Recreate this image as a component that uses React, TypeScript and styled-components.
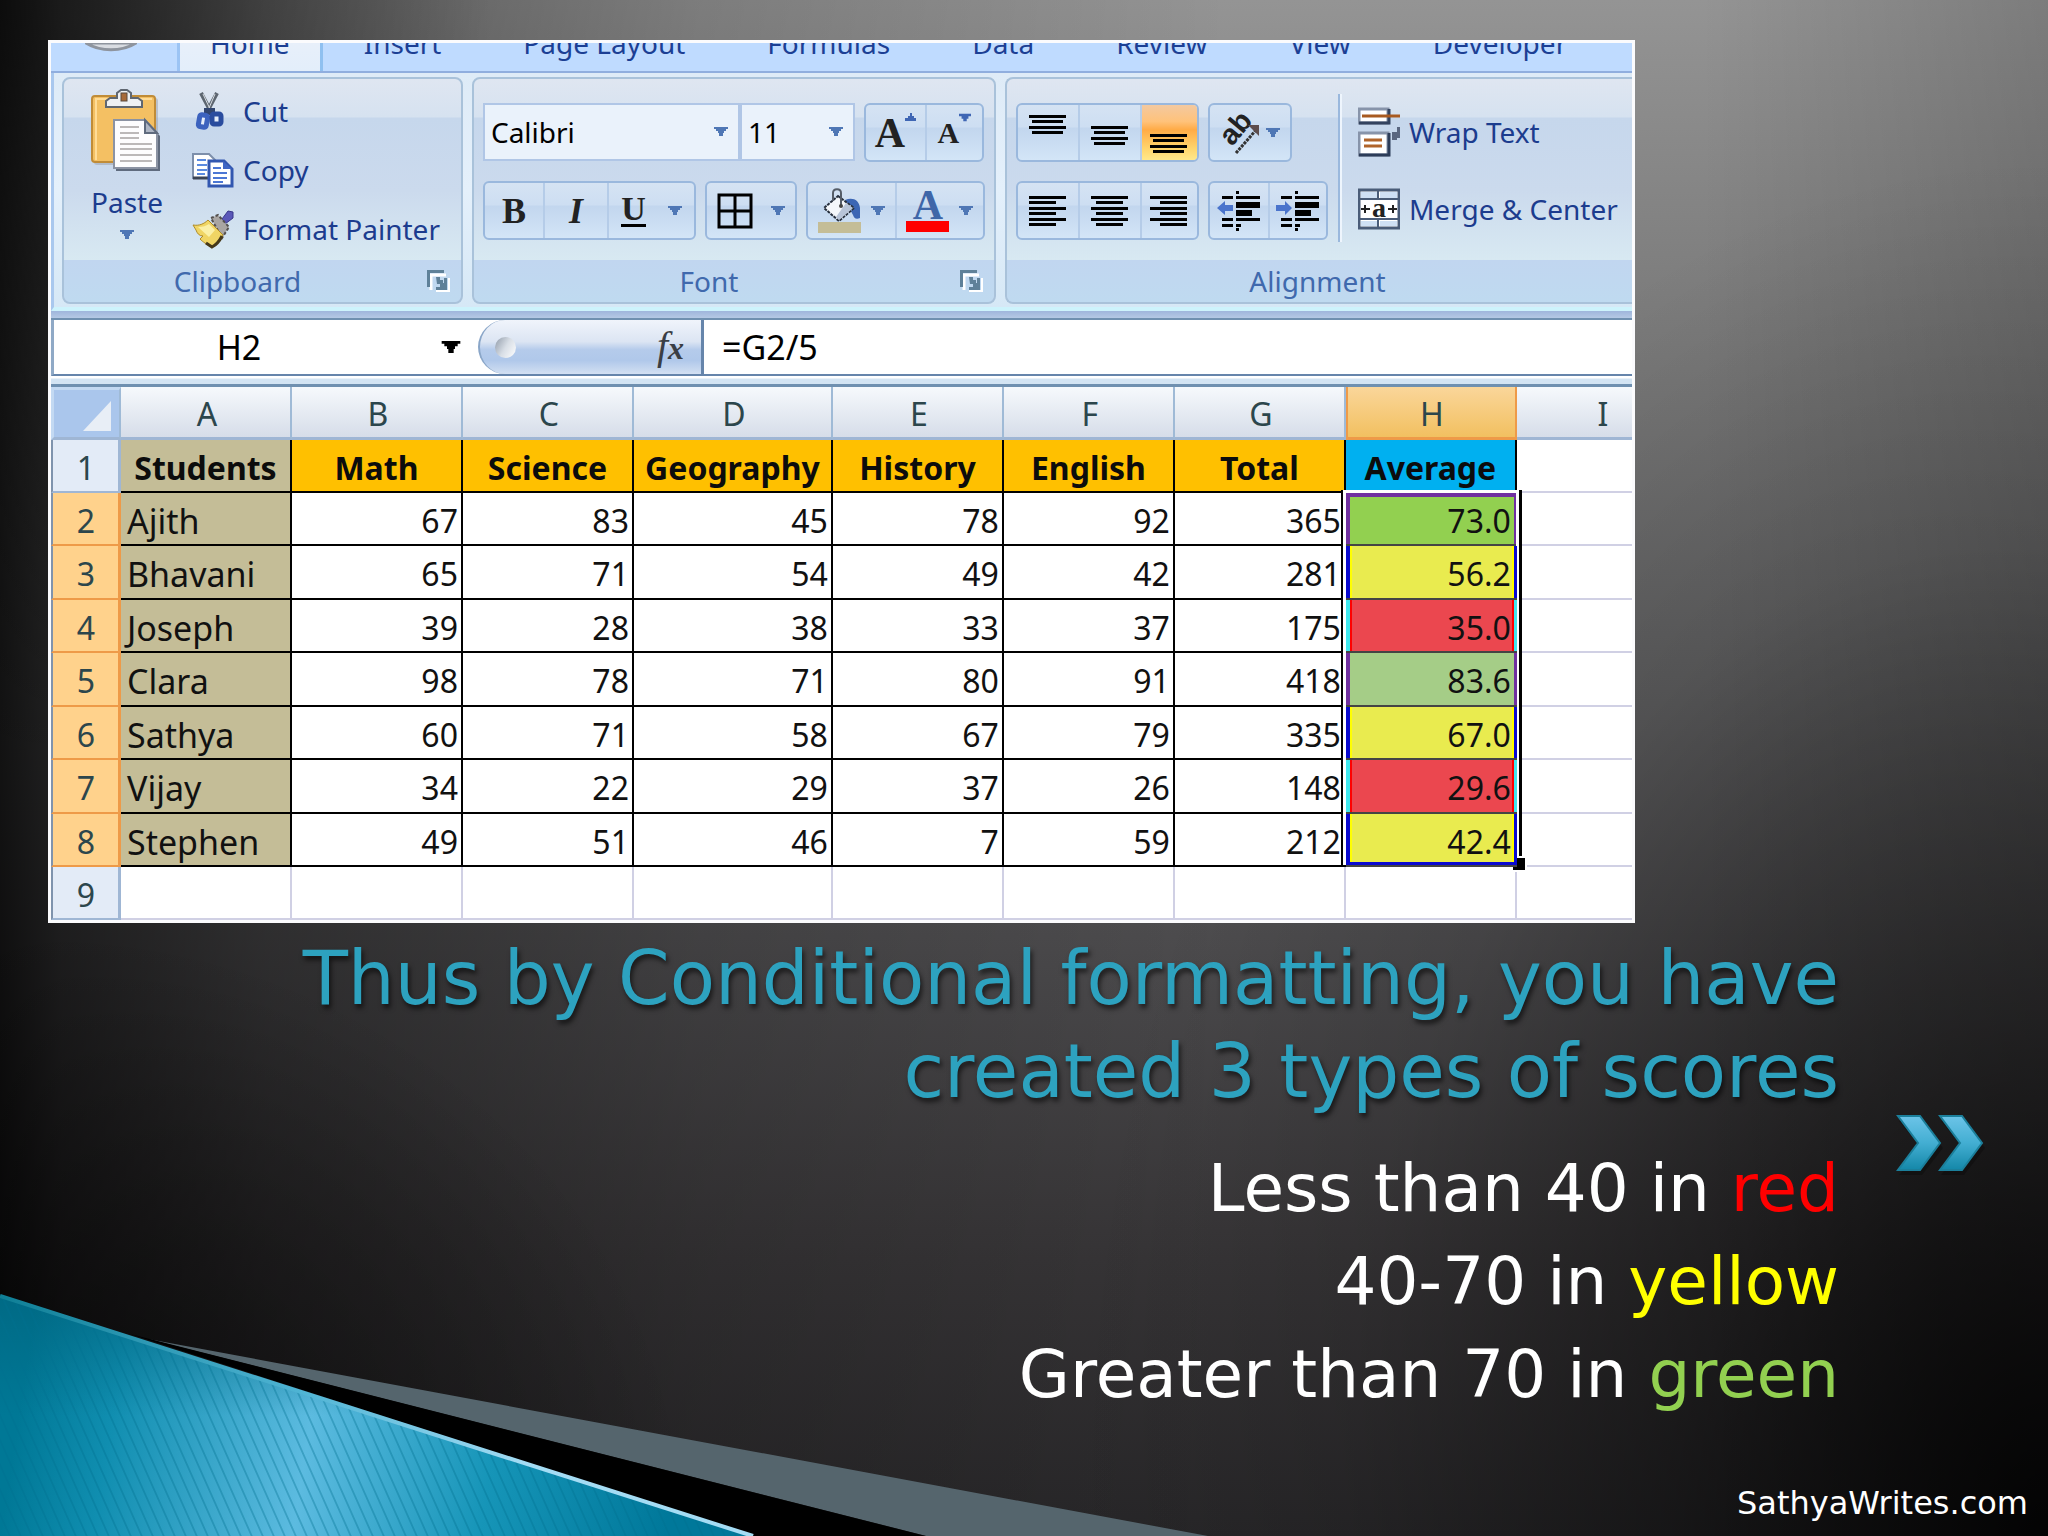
import React from "react";
import styled, { createGlobalStyle, css } from "styled-components";

const uiFont = `"Noto Sans", "Open Sans", sans-serif`;
const slideFont = `"DejaVu Sans", "Noto Sans", sans-serif`;
const serifFont = `"Liberation Serif", serif`;

const GlobalStyle = createGlobalStyle`
  *, *::before, *::after { box-sizing: border-box; }
  body { margin: 0; background: #000; font-family: ${uiFont}; }
  button, input, select { font: inherit; color: inherit; margin: 0; padding: 0; border: 0; background: none; border-radius: 0; }
  svg { display: block; }
`;

const Slide = styled.main`
  position: relative;
  min-height: 100vh;
  display: flex;
  flex-direction: column;
  padding: 40px 0 0 48px;
  overflow: hidden;
  background:
    radial-gradient(ellipse 48% 90% at 100% 100%, rgba(0,0,0,0.9) 0%, rgba(0,0,0,0.45) 38%, rgba(0,0,0,0.12) 72%, rgba(0,0,0,0) 100%),
    radial-gradient(ellipse 24% 50% at 0% 0%, rgba(0,0,0,0.6) 0%, rgba(0,0,0,0) 100%),
    radial-gradient(ellipse 34% 40% at 0% 100%, rgba(0,0,0,0.6) 0%, rgba(0,0,0,0) 100%),
    linear-gradient(to right, rgba(0,0,0,0.8) 0%, rgba(0,0,0,0.62) 3%, rgba(0,0,0,0.4) 13%, rgba(0,0,0,0.3) 22%, rgba(0,0,0,0.16) 34%, rgba(0,0,0,0) 60%, rgba(0,0,0,0) 83%, rgba(0,0,0,0.16) 100%),
    linear-gradient(to bottom, #949494 0%, #777777 24%, #606061 43%, #4d4c4e 61%, #373537 82%, #282729 100%);
`;

/* ---------- spreadsheet window ---------- */

const Sheet = styled.section`
  position: relative;
  width: 79.35%;
  border: 3px solid #fbfbfd;
  background: #fff;
  overflow: hidden;
`;

const Tabs = styled.nav`
  display: flex;
  align-items: flex-end;
  height: 30px;
  overflow: hidden;
  background: #bfdbff;
  border-bottom: 2px solid #90aede;
`;

const OfficeButton = styled.div`
  align-self: flex-start;
  width: 126px;
  padding-left: 34px;
`;

const Tab = styled.button<{ $active?: boolean }>`
  padding: 0 ${(p) => (p.$active ? 30 : 41)}px 12px;
  font-size: 28px;
  line-height: 32px;
  color: #1c3f94;
  white-space: nowrap;
  ${(p) =>
    p.$active &&
    css`
      background: linear-gradient(#eaf0fa, #e3eefa);
      border-left: 3px solid #9cc4f4;
      border-right: 3px solid #8fc0f0;
    `}
`;

const Ribbon = styled.div`
  display: flex;
  gap: 9px;
  padding: 4px 0 3px 8px;
  background: linear-gradient(#deebf7, #e4f0fb 50%, #d6e8f6);
  border-left: 3px solid #a9c8ee;
  border-bottom: 4px solid #cdf3fc;
`;

const Group = styled.fieldset<{ $open?: boolean }>`
  min-width: 0;
  margin: 0;
  padding: 0;
  display: flex;
  flex-direction: column;
  border: 2px solid #a9c2da;
  border-radius: 8px;
  background: linear-gradient(#dfe6f1 0, #d6e2f0 38px, #c6d7ec 39px, #cbdaed 50%, #d8e9f2 181px, #c1d8f0 182px);
  overflow: hidden;
  ${(p) =>
    p.$open &&
    css`
      flex: 1;
      border-right: 0;
      border-top-right-radius: 0;
      border-bottom-right-radius: 0;
    `}
`;

const GroupBody = styled.div`
  display: flex;
  height: 181px;
`;

const GroupFooter = styled.div`
  display: flex;
  align-items: center;
  height: 42px;
  font-size: 28px;
  line-height: 40px;
  color: #4069ad;
  background: linear-gradient(#c1d6f0, #bfdaf0);
`;

const GroupName = styled.span`
  flex: 1;
  padding-right: 4px;
  text-align: center;
`;

const Launcher = styled.button`
  width: 46px;
  display: flex;
  padding-left: 12px;
`;

const PasteButton = styled.button`
  display: flex;
  flex-direction: column;
  align-items: center;
  margin-left: 27px;
  padding-top: 10px;
  height: 170px;
  font-size: 28px;
  line-height: 40px;
  color: #1c3c8e;
`;

const PasteText = styled.span`
  margin: 9px 0 8px;
`;

const ClipList = styled.div`
  display: flex;
  flex-direction: column;
  padding: 2px 21px 0 29px;
`;

const IconTextButton = styled.button`
  display: flex;
  align-items: center;
  gap: 9px;
  height: 59px;
  font-size: 28px;
  line-height: 40px;
  color: #1c3c8e;
  white-space: nowrap;
`;

const Rows = styled.div`
  display: flex;
  flex-direction: column;
  gap: 19px;
  padding: 24px 9px 0;
`;

const Row = styled.div`
  display: flex;
  gap: 9px;
`;

const ComboPair = styled.div`
  display: flex;
`;

const Combo = styled.label<{ $w: number }>`
  position: relative;
  width: ${(p) => p.$w}px;
  height: 58px;
  border: 2px solid #b0c6e6;
  background: #eaf2fb;
`;

const ComboArrow = styled.span`
  position: absolute;
  right: 10px;
  top: 22px;
  pointer-events: none;
`;

const ComboSelect = styled.select`
  appearance: none;
  width: 100%;
  height: 100%;
  padding: 0 6px;
  font-size: 28px;
  color: #000;
`;

const ButtonBar = styled.div`
  display: flex;
  height: 59px;
  border: 2px solid #9ab8dd;
  border-radius: 6px;
  background: linear-gradient(#d5e3f3 0, #cddef2 40%, #c2d6ee 42%, #d3e5f7 100%);
  overflow: hidden;
`;

const Tool = styled.button<{ $w: number; $on?: boolean; $gap?: number }>`
  display: flex;
  align-items: center;
  justify-content: center;
  gap: ${(p) => p.$gap ?? 10}px;
  width: ${(p) => p.$w}px;
  color: #1a1a1a;
  & + & {
    border-left: 2px solid #b5cce8;
  }
  ${(p) =>
    p.$on &&
    css`
      background: linear-gradient(#f3c9a0 0, #ffc27a 30%, #ffab46 45%, #ffd66e 80%, #ffe88a 100%);
    `}
`;

const Glyph = styled.span<{ $size: number; $italic?: boolean; $underline?: boolean; $blue?: boolean }>`
  font-family: ${serifFont};
  font-weight: bold;
  font-size: ${(p) => p.$size}px;
  line-height: 40px;
  font-style: ${(p) => (p.$italic ? "italic" : "normal")};
  color: ${(p) => (p.$blue ? "#3f66a8" : "#222")};
  ${(p) =>
    p.$underline &&
    css`
      border-bottom: 3px solid #000;
      line-height: 30px;
    `}
`;

const Sized = styled.span`
  display: flex;
  align-items: flex-start;
`;

const InkStack = styled.span`
  display: flex;
  flex-direction: column;
  align-items: center;
`;

const InkLetter = styled(Glyph)`
  line-height: 32px;
`;

const InkBar = styled.span<{ $color: string }>`
  width: 43px;
  height: 11px;
  background: ${(p) => p.$color};
`;

const Divider = styled.div`
  width: 4px;
  height: 148px;
  margin: 15px 16px 0 1px;
  border-left: 2px solid #9ab8dd;
  border-right: 2px solid #eef5fd;
`;

const TextButtons = styled.div`
  display: flex;
  flex-direction: column;
  gap: 18px;
  padding-top: 23px;
`;

const Seam = styled.div`
  height: 9px;
  background: linear-gradient(#9fb6dc, #b4c8e4);
  border-bottom: 2px solid #6f90b0;
`;

const FormulaBar = styled.div`
  display: flex;
  height: 56px;
  border-left: 3px solid #8fa9c6;
  border-bottom: 2px solid #6685ab;
  background: #fff;
  font-size: 34px;
  color: #000;
`;

const NameBox = styled.div`
  display: flex;
  align-items: center;
  width: 424px;
`;

const NameInput = styled.input`
  width: 370px;
  text-align: center;
`;

const NameArrow = styled.button`
  padding-left: 17px;
`;

const FunctionPill = styled.div`
  display: flex;
  align-items: center;
  justify-content: space-between;
  width: 226px;
  padding: 0 17px 0 15px;
  border-left: 2px solid #8aa6c8;
  border-right: 3px solid #6685ab;
  border-radius: 28px 0 0 28px;
  background: linear-gradient(#f0f4fb 0, #dce5f3 40%, #b5cbeb 55%, #b0c8ea 75%, #d3e0f2 100%);
`;

const Knob = styled.span`
  width: 21px;
  height: 21px;
  border-radius: 50%;
  background: linear-gradient(120deg, #8f9aa8, #d8dee6 50%, #fff);
`;

const FxButton = styled.button`
  font-family: ${serifFont};
  font-style: italic;
  font-size: 40px;
  line-height: 40px;
  color: #3a3e45;
`;

const FxSmall = styled.span`
  font-size: 32px;
  font-weight: bold;
`;

const FormulaInput = styled.input`
  flex: 1;
  min-width: 0;
  padding: 0 18px;
`;

const Strip = styled.div`
  height: 11px;
  border-bottom: 3px solid #6f90b0;
  background: linear-gradient(#fff 0, #fff 2px, #d3e4f3 3px);
`;

/* ---------- grid ---------- */

const columns = [70, 171, 171, 171, 199, 171, 171, 171, 171, 171];
const totalWidth = columns.reduce((a, b) => a + b, 0);

/* The last column runs past the window's right edge. */
const Grid = styled.table`
  width: 103.54%;
  table-layout: fixed;
  border-collapse: separate;
  border-spacing: 0;
  font-size: 32px;
  line-height: 40px;
  color: #111;
`;

const Col = styled.col<{ $w: number }>`
  width: ${(p) => (p.$w / totalWidth) * 100}%;
`;

const GridRow = styled.tr<{ $tall?: boolean }>`
  height: ${(p) => (p.$tall ? 54 : 53)}px;
`;

const cell = css`
  padding: 4px 3px 0 6px;
  white-space: nowrap;
  overflow: hidden;
`;

const ColumnHead = styled.th<{ $on?: boolean }>`
  ${cell}
  font-weight: normal;
  color: #2c464c;
  background: linear-gradient(#f6f9fc, #d6dde9);
  border-right: 2px solid #9fbad6;
  border-bottom: 3px solid #9fb6d4;
  ${(p) =>
    p.$on &&
    css`
      background: linear-gradient(#fad69a, #f2c060);
      border-color: #ee9a48;
      box-shadow: inset 2px 0 #ee9a48;
    `}
`;

const Corner = styled.td`
  padding: 0;
  background: #aac6ec;
  border: 3px solid #c3d9f2;
  border-right: 2px solid #9fbad6;
  border-bottom-color: #9fb6d4;
`;

const CornerMark = styled.svg`
  margin: 4px 8px 0 auto;
`;

const RowHead = styled.th<{ $on?: boolean }>`
  ${cell}
  font-weight: normal;
  color: #2c464c;
  padding-left: 4px;
  background: ${(p) => (p.$on ? "#ffd28c" : "#e3ebf7")};
  border-right: 3px solid ${(p) => (p.$on ? "#ee9a48" : "#9fb6d4")};
  border-bottom: 2px solid ${(p) => (p.$on ? "#ee9a48" : "#9fb6d4")};
  border-left: 2px solid #7f93ad;
`;

const Title = styled.th<{ $bg: string; $last?: boolean }>`
  ${cell}
  padding: 4px 0 0;
  text-align: center;
  font-weight: bold;
  color: #0c0c0c;
  background: ${(p) => p.$bg};
  border-right: 2px solid #000;
  border-bottom: ${(p) => (p.$last ? "2px solid #d0703a" : "2px solid #000")};
`;

const Name = styled.td`
  ${cell}
  font-size: 34px;
  background: #c4bd97;
  border-right: 2px solid #000;
  border-bottom: 2px solid #000;
`;

const Num = styled.td`
  ${cell}
  text-align: right;
  border-right: 2px solid #000;
  border-bottom: 2px solid #000;
`;

const Empty = styled.td`
  border-right: 2px solid #d0d0e4;
  border-bottom: 2px solid #d0d0e4;
`;

const bands = {
  green: { bg: "#92d050", edge: "#7030a0", inner: "#92d050" },
  sage: { bg: "#a5cd87", edge: "#7030a0", inner: "#a5cd87" },
  yellow: { bg: "#e9eb4f", edge: "#0a0ad0", inner: "#ffff00" },
  red: { bg: "#eb474f", edge: "#3fe8ee", inner: "#ff0000" },
};
type Band = keyof typeof bands;

const Avg = styled.td<{ $band: Band; $first?: boolean; $last?: boolean }>`
  ${cell}
  position: relative;
  overflow: visible;
  padding-right: 6px;
  text-align: right;
  background: ${(p) => bands[p.$band].bg};
  border-bottom: 2px solid #444;
  box-shadow:
    inset 4px 0 ${(p) => bands[p.$band].edge},
    inset -3px 0 ${(p) => bands[p.$band].edge}
    ${(p) => p.$first && `, inset 0 4px ${bands[p.$band].edge}`}
    ${(p) => p.$last && `, inset 0 -3px ${bands[p.$band].edge}`},
    inset 6px 0 ${(p) => bands[p.$band].inner},
    inset -5px 0 ${(p) => bands[p.$band].inner};
`;

const Selection = styled.span`
  position: absolute;
  top: -3px;
  left: -3px;
  width: calc(100% + 5px);
  height: calc(700% + 18px);
  border: 3px solid #fff;
  box-shadow: -2px 0 #000, 3px 0 #000, 0 2px #000;
  pointer-events: none;
  &::after {
    content: "";
    position: absolute;
    right: -9px;
    bottom: -8px;
    width: 12px;
    height: 12px;
    background: #000;
    outline: 2px solid #fff;
  }
`;

/* ---------- slide text ---------- */

const Copy = styled.div`
  position: relative;
  padding: 9px 10.45% 0 0;
  text-align: right;
  font-family: ${slideFont};
`;

const Heading = styled.h1`
  margin: 0 0 24px;
  font-size: 74px;
  font-weight: normal;
  line-height: 93px;
  color: #2da2bf;
  text-shadow: 2px 4px 5px rgba(0, 0, 0, 0.6);
`;

const Line = styled.p`
  margin: 0;
  font-size: 66px;
  line-height: 93px;
  color: #fff;
`;

const Hue = styled.span<{ $color: string }>`
  color: ${(p) => p.$color};
`;

const Chevrons = styled.svg`
  position: absolute;
  right: 62px;
  top: 192px;
  overflow: visible;
`;

const Footer = styled.footer`
  position: relative;
  margin-top: auto;
  padding: 0 20px 10px 0;
  text-align: right;
  font-family: ${slideFont};
  font-size: 32px;
  line-height: 46px;
  color: #fff;
`;

const Corners = styled.svg`
  position: absolute;
  left: 0;
  bottom: 0;
`;

/* ---------- icons ---------- */

const Down = ({ color = "#4f77b5", w = 14 }: { color?: string; w?: number }) => (
  <svg width={w} height={w === 14 ? 9 : 12} viewBox="0 0 14 9">
    <path d="M0 0h14v2h-2v2h-2v2H9v3H5V6H4V4H2V2H0z" fill={color} />
  </svg>
);

const LaunchIcon = () => (
  <svg width="23" height="22" viewBox="0 0 23 22">
    <path d="M4 20V5h15" fill="none" stroke="#fff" strokeWidth="3" />
    <path d="M1.500 17V1.500H17" fill="none" stroke="#5f8199" strokeWidth="3" />
    <path d="M9 7h4v3h3v3h1V8h3v13H9v-4h4v-3h-3z" fill="#5f8199" />
    <path d="M22 8v13H9" fill="none" stroke="#fff" strokeWidth="2" />
  </svg>
);

const PasteIcon = () => (
  <svg width="72" height="84" viewBox="0 0 72 84">
    <rect x="3" y="9" width="64" height="67" rx="3" fill="#9b9fa8" opacity=".5" />
    <rect x="1" y="7" width="63" height="66" rx="3" fill="#f4c063" stroke="#c08c38" strokeWidth="2" />
    <path d="M5 71V10h56" fill="none" stroke="#ffdc96" strokeWidth="2" />
    <path d="M15 18v-6l4-3h7V4l4-3h6l4 3v5h7l4 3v6z" fill="#eef0f3" stroke="#5f6670" strokeWidth="2" />
    <rect x="30" y="4" width="6" height="8" fill="#a86a38" stroke="#58483c" strokeWidth="1" />
    <path d="M25 33h31l13 14v35H25z" fill="#5f6b7e" />
    <path d="M23 31h31l12 13v35H23z" fill="#fdfdfe" stroke="#8b93a3" strokeWidth="2" />
    <path d="M54 31v13h12z" fill="#aeb6c4" stroke="#5f6b7e" strokeWidth="2" />
    <path d="M29 38h19M29 44h19M29 49h19M29 55h32M29 60h32M29 66h32M29 72h32" stroke="#bcb9b9" strokeWidth="2" />
  </svg>
);

const CutIcon = () => (
  <svg width="42" height="40" viewBox="0 0 42 40">
    <path d="M9 2l9 17M25 2l-9 17" stroke="#5d6670" strokeWidth="4" />
    <path d="M11 3l7 15M23 3l-6 14" stroke="#d8dde2" strokeWidth="1" />
    <path d="M12 17h11v7H12z" fill="#31456f" />
    <rect x="7" y="24" width="8" height="12" rx="2" fill="#e5edf9" stroke="#3c62be" strokeWidth="5" transform="rotate(10 11 30)" />
    <rect x="20" y="23" width="9" height="10" rx="2" fill="#e5edf9" stroke="#2a4c9e" strokeWidth="5" />
  </svg>
);

const CopyIcon = () => (
  <svg width="42" height="36" viewBox="0 0 42 36">
    <path d="M1 2h16l6 6v18H1z" fill="#fff" stroke="#7d8fab" strokeWidth="2" />
    <path d="M1 26h20" stroke="#3a4354" strokeWidth="3" />
    <path d="M5 8h9M5 13h10M5 18h10M5 22h8" stroke="#5b8be0" strokeWidth="2" />
    <path d="M17 9h15l8 8v17H17z" fill="#fff" stroke="#3257b0" strokeWidth="3" />
    <path d="M31 9v8h9z" fill="#3f66c4" />
    <path d="M21 16h8M21 21h14M21 26h14M21 30h10" stroke="#4c77d4" strokeWidth="2" />
  </svg>
);

const BrushIcon = () => (
  <svg width="42" height="40" viewBox="0 0 42 40">
    <path d="M30 10l6-8 5 1v6l-8 6z" fill="#5a58b8" stroke="#38368a" />
    <path d="M19 9l7-3 11 12-7 11z" fill="#a9a5a2" stroke="#54504e" strokeWidth="2" strokeDasharray="3 2" />
    <path d="M1 16c6 1 11-1 15-5l15 15c-3 6-6 10-11 12-6-3-9-5-12-8l3-3c-4 0-6-3-7-6z" fill="#f0d564" stroke="#b08c28" strokeWidth="1" />
    <path d="M6 18c5 0 8-1 11-3l6 6-6 7z" fill="#fbf0a6" />
    <path d="M30 27c-3 6-6 9-10 11l-6-4" fill="none" stroke="#453818" strokeWidth="3" />
  </svg>
);

const BordersIcon = () => (
  <svg width="36" height="36" viewBox="0 0 36 36">
    <path d="M2 2h32v32H2zM18 2v32M2 18h32" fill="none" stroke="#000" strokeWidth="3" />
  </svg>
);

const BucketIcon = () => (
  <svg width="43" height="34" viewBox="0 0 43 34">
    <path d="M27 12c8-3 14 0 15 8v10c-4 2-6 0-7-3z" fill="#3c66b4" />
    <path d="M20 8l16 12-15 13L6 20z" fill="#f4f7fb" stroke="#27303e" strokeWidth="2" strokeDasharray="3 1" />
    <path d="M21 32l14-12-7-5-10 14z" fill="#b7c4d8" />
    <path d="M15 13V5c0-5 8-5 8 0v13" fill="none" stroke="#555d68" strokeWidth="2" />
    <circle cx="23" cy="18" r="2" fill="#444" />
  </svg>
);

const Lines = ({ h, rows }: { h: number; rows: [number, number, number][] }) => (
  <svg width="38" height={h} viewBox={`0 0 38 ${h}`}>
    {rows.map(([x, y, w]) => (
      <rect key={y} x={x} y={y} width={w} height="3" fill="#000" />
    ))}
  </svg>
);

const vertical = (top: number): [number, number, number][] => [
  [0, top, 37],
  [3, top + 5, 31],
  [0, top + 11, 37],
  [3, top + 16, 31],
];

const horizontal = (short: number): [number, number, number][] =>
  [0, 5, 11, 16, 22, 27].map((y, i) => (i % 2 ? [short, y, 27] : [0, y, 37]));

const OrientationIcon = () => (
  <svg width="42" height="44" viewBox="0 0 42 44">
    <text x="0" y="0" transform="translate(13 36) rotate(-50)" fontFamily="Liberation Sans" fontWeight="bold" fontSize="29" fill="#222">ab</text>
    <path d="M17 42L37 19" stroke="#333" strokeWidth="3" strokeDasharray="3 1" />
    <path d="M29 14h11v11z" fill="#5d4d4d" />
  </svg>
);

const IndentIcon = ({ right }: { right?: boolean }) => (
  <svg width="43" height="42" viewBox="0 0 43 42">
    <path d="M5 6h11v3H5zM5 28h11v3H5zM5 34h11v3H5zM19 6h24v3H19zM19 12h24v6H19zM19 20h16v6H19zM19 28h24v3H19zM19 34h5v3h-5z" fill="#000" />
    <path d="M19 1h3v3h-3zM19 38h3v3h-3z" fill="#000" />
    <path d={right ? "M16 18L9 11v4H0v6h9v4z" : "M0 18l8-7v4h8v6H8v4z"} fill="#4a74cc" />
  </svg>
);

const WrapIcon = () => (
  <svg width="42" height="50" viewBox="0 0 42 50">
    <path d="M1 2h29v14H1z" fill="#fff" stroke="#8794aa" strokeWidth="3" />
    <path d="M1 16h30V2" fill="none" stroke="#33435f" strokeWidth="3" />
    <path d="M4 9h38" stroke="#a85a20" strokeWidth="3" />
    <path d="M1 26h29v22H1z" fill="#fff" stroke="#8794aa" strokeWidth="3" />
    <path d="M1 48h30V26" fill="none" stroke="#2c3c58" strokeWidth="3" />
    <path d="M6 33h18M6 39h18" stroke="#b0642a" strokeWidth="3" />
    <path d="M39 20h3v11h-3v2h-5v-8h5z" fill="#5a6780" />
  </svg>
);

const MergeIcon = () => (
  <svg width="42" height="42" viewBox="0 0 42 42">
    <rect x="1" y="2" width="40" height="38" fill="#fff" stroke="#4a5c78" strokeWidth="3" />
    <path d="M3 4h16v6H3zM22 4h17v6H22zM3 33h16v5H3zM22 33h17v5H22z" fill="#cfe0f4" />
    <path d="M20 3v9M20 31v8M2 11h38M2 31h38" stroke="#4a5c78" strokeWidth="2" />
    <path d="M3 21h9M7 17v8M30 21h9M35 17v8" stroke="#222" strokeWidth="2" />
    <text x="21" y="29" textAnchor="middle" fontFamily="Liberation Serif" fontWeight="bold" fontSize="28" fill="#222">a</text>
  </svg>
);

/* ---------- data ---------- */

const tabs = ["Insert", "Page Layout", "Formulas", "Data", "Review", "View", "Developer"];
const letters = ["A", "B", "C", "D", "E", "F", "G", "H", "I"];
const subjects = ["Math", "Science", "Geography", "History", "English", "Total"];
const students: { name: string; marks: number[]; avg: string; band: Band }[] = [
  { name: "Ajith", marks: [67, 83, 45, 78, 92, 365], avg: "73.0", band: "green" },
  { name: "Bhavani", marks: [65, 71, 54, 49, 42, 281], avg: "56.2", band: "yellow" },
  { name: "Joseph", marks: [39, 28, 38, 33, 37, 175], avg: "35.0", band: "red" },
  { name: "Clara", marks: [98, 78, 71, 80, 91, 418], avg: "83.6", band: "sage" },
  { name: "Sathya", marks: [60, 71, 58, 67, 79, 335], avg: "67.0", band: "yellow" },
  { name: "Vijay", marks: [34, 22, 29, 37, 26, 148], avg: "29.6", band: "red" },
  { name: "Stephen", marks: [49, 51, 46, 7, 59, 212], avg: "42.4", band: "yellow" },
];

export default function App() {
  return (
    <>
      <GlobalStyle />
      <Slide>
        <Corners width="1210" height="242" viewBox="0 0 1210 242" aria-hidden="true">
          <defs>
            <linearGradient id="sea" gradientUnits="userSpaceOnUse" x1="0" y1="242" x2="650" y2="342">
              <stop offset="0" stopColor="#007896" />
              <stop offset="0.14" stopColor="#108eb0" />
              <stop offset="0.44" stopColor="#5cbbe0" />
              <stop offset="0.72" stopColor="#1695b8" />
              <stop offset="1" stopColor="#00789a" />
            </linearGradient>
            <linearGradient id="shade" x1="0" y1="0" x2="0" y2="1">
              <stop offset="0" stopColor="#00647e" stopOpacity="0.7" />
              <stop offset="0.5" stopColor="#00647e" stopOpacity="0" />
            </linearGradient>
            <linearGradient id="rim" x1="0" y1="0" x2="1" y2="0">
              <stop offset="0" stopColor="#0f7f96" />
              <stop offset="0.4" stopColor="#4fb4d4" />
              <stop offset="0.7" stopColor="#a4dcf4" />
              <stop offset="1" stopColor="#a4dcf4" />
            </linearGradient>
            <pattern id="ribs" width="11" height="20" patternUnits="userSpaceOnUse" patternTransform="skewX(24)">
              <path d="M1 0v20" stroke="#00708f" strokeOpacity="0.35" strokeWidth="2" />
            </pattern>
          </defs>
          <path d="M148 45L1208 242H926z" fill="#55656d" />
          <path d="M130 40L926 242H753z" fill="#000" />
          <path d="M0 2L753 242H0z" fill="url(#sea)" />
          <path d="M0 2L753 242H0z" fill="url(#shade)" />
          <path d="M0 2L753 242H0z" fill="url(#ribs)" />
          <path d="M0 2L753 242" stroke="url(#rim)" strokeWidth="4" />
        </Corners>

        <Sheet aria-label="Spreadsheet">
          <Tabs>
            <OfficeButton>
              <svg width="52" height="10" viewBox="0 0 52 10">
                <path d="M1 0c14 9 36 9 50 0z" fill="#d9dce2" stroke="#8e949e" strokeWidth="3" />
              </svg>
            </OfficeButton>
            <Tab $active>Home</Tab>
            {tabs.map((t) => (
              <Tab key={t}>{t}</Tab>
            ))}
          </Tabs>

          <Ribbon>
            <Group>
              <GroupBody>
                <PasteButton>
                  <PasteIcon />
                  <PasteText>Paste</PasteText>
                  <Down />
                </PasteButton>
                <ClipList>
                  <IconTextButton><CutIcon />Cut</IconTextButton>
                  <IconTextButton><CopyIcon />Copy</IconTextButton>
                  <IconTextButton><BrushIcon />Format Painter</IconTextButton>
                </ClipList>
              </GroupBody>
              <GroupFooter>
                <GroupName>Clipboard</GroupName>
                <Launcher aria-label="Clipboard options"><LaunchIcon /></Launcher>
              </GroupFooter>
            </Group>

            <Group>
              <GroupBody>
                <Rows>
                  <Row>
                    <ComboPair>
                      <Combo $w={257}>
                        <ComboSelect aria-label="Font" defaultValue="Calibri"><option>Calibri</option></ComboSelect>
                        <ComboArrow><Down /></ComboArrow>
                      </Combo>
                      <Combo $w={115}>
                        <ComboSelect aria-label="Font size" defaultValue="11"><option>11</option></ComboSelect>
                        <ComboArrow><Down /></ComboArrow>
                      </Combo>
                    </ComboPair>
                    <ButtonBar>
                      <Tool $w={59} aria-label="Grow font">
                        <Sized><Glyph $size={42}>A</Glyph><svg width="11" height="8" viewBox="0 0 11 8"><path d="M5 0h2v3h2v2h2v3H0V5h3V3h2z" fill="#3f66b4" /></svg></Sized>
                      </Tool>
                      <Tool $w={57} aria-label="Shrink font">
                        <Sized><Glyph $size={30}>A</Glyph><svg width="12" height="9" viewBox="0 0 14 9"><path d="M0 0h14v3h-3v3H9v3H5V6H3V3H0z" fill="#3f66b4" /></svg></Sized>
                      </Tool>
                    </ButtonBar>
                  </Row>
                  <Row>
                    <ButtonBar>
                      <Tool $w={58} aria-label="Bold"><Glyph $size={36}>B</Glyph></Tool>
                      <Tool $w={64} aria-label="Italic"><Glyph $size={36} $italic>I</Glyph></Tool>
                      <Tool $w={87} $gap={22} aria-label="Underline"><Glyph $size={34} $underline>U</Glyph><Down /></Tool>
                    </ButtonBar>
                    <ButtonBar>
                      <Tool $w={88} $gap={18} aria-label="Borders"><BordersIcon /><Down /></Tool>
                    </ButtonBar>
                    <ButtonBar>
                      <Tool $w={87} aria-label="Fill color"><InkStack><BucketIcon /><InkBar $color="#c4bd97" /></InkStack><Down /></Tool>
                      <Tool $w={88} aria-label="Font color"><InkStack><InkLetter $size={42} $blue>A</InkLetter><InkBar $color="#ff0000" /></InkStack><Down /></Tool>
                    </ButtonBar>
                  </Row>
                </Rows>
              </GroupBody>
              <GroupFooter>
                <GroupName>Font</GroupName>
                <Launcher aria-label="Font options"><LaunchIcon /></Launcher>
              </GroupFooter>
            </Group>

            <Group $open>
              <GroupBody>
                <Rows>
                  <Row>
                    <ButtonBar>
                      <Tool $w={60} aria-label="Top align"><Lines h={50} rows={vertical(7)} /></Tool>
                      <Tool $w={62} aria-label="Middle align"><Lines h={50} rows={vertical(18)} /></Tool>
                      <Tool $w={57} $on aria-label="Bottom align"><Lines h={50} rows={vertical(26)} /></Tool>
                    </ButtonBar>
                    <ButtonBar>
                      <Tool $w={80} $gap={5} aria-label="Orientation"><OrientationIcon /><Down /></Tool>
                    </ButtonBar>
                  </Row>
                  <Row>
                    <ButtonBar>
                      <Tool $w={60} aria-label="Align left"><Lines h={30} rows={horizontal(0)} /></Tool>
                      <Tool $w={62} aria-label="Center"><Lines h={30} rows={horizontal(5)} /></Tool>
                      <Tool $w={57} aria-label="Align right"><Lines h={30} rows={horizontal(10)} /></Tool>
                    </ButtonBar>
                    <ButtonBar>
                      <Tool $w={58} aria-label="Decrease indent"><IndentIcon /></Tool>
                      <Tool $w={58} aria-label="Increase indent"><IndentIcon right /></Tool>
                    </ButtonBar>
                  </Row>
                </Rows>
                <Divider />
                <TextButtons>
                  <IconTextButton><WrapIcon />Wrap Text</IconTextButton>
                  <IconTextButton><MergeIcon />Merge &amp; Center</IconTextButton>
                </TextButtons>
              </GroupBody>
              <GroupFooter>
                <GroupName>Alignment</GroupName>
              </GroupFooter>
            </Group>
          </Ribbon>

          <Seam />
          <FormulaBar>
            <NameBox>
              <NameInput aria-label="Name box" defaultValue="H2" />
              <NameArrow aria-label="Named cells"><Down color="#000" w={20} /></NameArrow>
            </NameBox>
            <FunctionPill>
              <Knob />
              <FxButton aria-label="Insert function">f<FxSmall>x</FxSmall></FxButton>
            </FunctionPill>
            <FormulaInput aria-label="Formula" defaultValue="=G2/5" />
          </FormulaBar>
          <Strip />

          <Grid>
            <colgroup>
              {columns.map((w, i) => (
                <Col key={i} $w={w} />
              ))}
            </colgroup>
            <thead>
              <GridRow>
                <Corner>
                  <CornerMark width="28" height="30" viewBox="0 0 28 30"><path d="M28 0v30H0z" fill="#e8eef6" /></CornerMark>
                </Corner>
                {letters.map((l) => (
                  <ColumnHead key={l} scope="col" $on={l === "H"}>{l}</ColumnHead>
                ))}
              </GridRow>
            </thead>
            <tbody>
              <GridRow>
                <RowHead scope="row">1</RowHead>
                <Title $bg="#c4bd97">Students</Title>
                {subjects.map((s) => (
                  <Title key={s} $bg="#ffc000">{s}</Title>
                ))}
                <Title $bg="#00b0f0" $last>Average</Title>
                <Empty />
              </GridRow>
              {students.map((s, r) => (
                <GridRow key={s.name} $tall={r % 2 === 1}>
                  <RowHead scope="row" $on>{r + 2}</RowHead>
                  <Name>{s.name}</Name>
                  {s.marks.map((m, i) => (
                    <Num key={i}>{m}</Num>
                  ))}
                  <Avg $band={s.band} $first={r === 0} $last={r === students.length - 1}>
                    {s.avg}
                    {r === 0 && <Selection />}
                  </Avg>
                  <Empty />
                </GridRow>
              ))}
              <GridRow>
                <RowHead scope="row">9</RowHead>
                {letters.map((l) => (
                  <Empty key={l} />
                ))}
              </GridRow>
            </tbody>
          </Grid>
        </Sheet>

        <Copy>
          <Heading>
            Thus by Conditional formatting, you have
            <br />
            created 3 types of scores
          </Heading>
          <Line>Less than 40 in <Hue $color="#ff0000">red</Hue></Line>
          <Line>40-70 in <Hue $color="#ffff00">yellow</Hue></Line>
          <Line>Greater than 70 in <Hue $color="#92d050">green</Hue></Line>
          <Chevrons width="90" height="56" viewBox="0 0 90 56" aria-hidden="true">
            <defs>
              <linearGradient id="chev" x1="0" y1="0" x2="0" y2="1">
                <stop offset="0" stopColor="#6cc4e8" />
                <stop offset="0.5" stopColor="#43aed2" />
                <stop offset="1" stopColor="#1487a8" />
              </linearGradient>
            </defs>
            <path d="M3 6h23l21 27-21 27H3l22-27zM45 6h23l21 27-21 27H45l22-27z" fill="#000" opacity="0.25" />
            <path d="M2 1h22l20 27-20 27H2l20-27zM44 1h22l20 27-20 27H44l20-27z" fill="url(#chev)" stroke="#1b7f9b" strokeWidth="2" />
          </Chevrons>
        </Copy>
        <Footer>SathyaWrites.com</Footer>
      </Slide>
    </>
  );
}
